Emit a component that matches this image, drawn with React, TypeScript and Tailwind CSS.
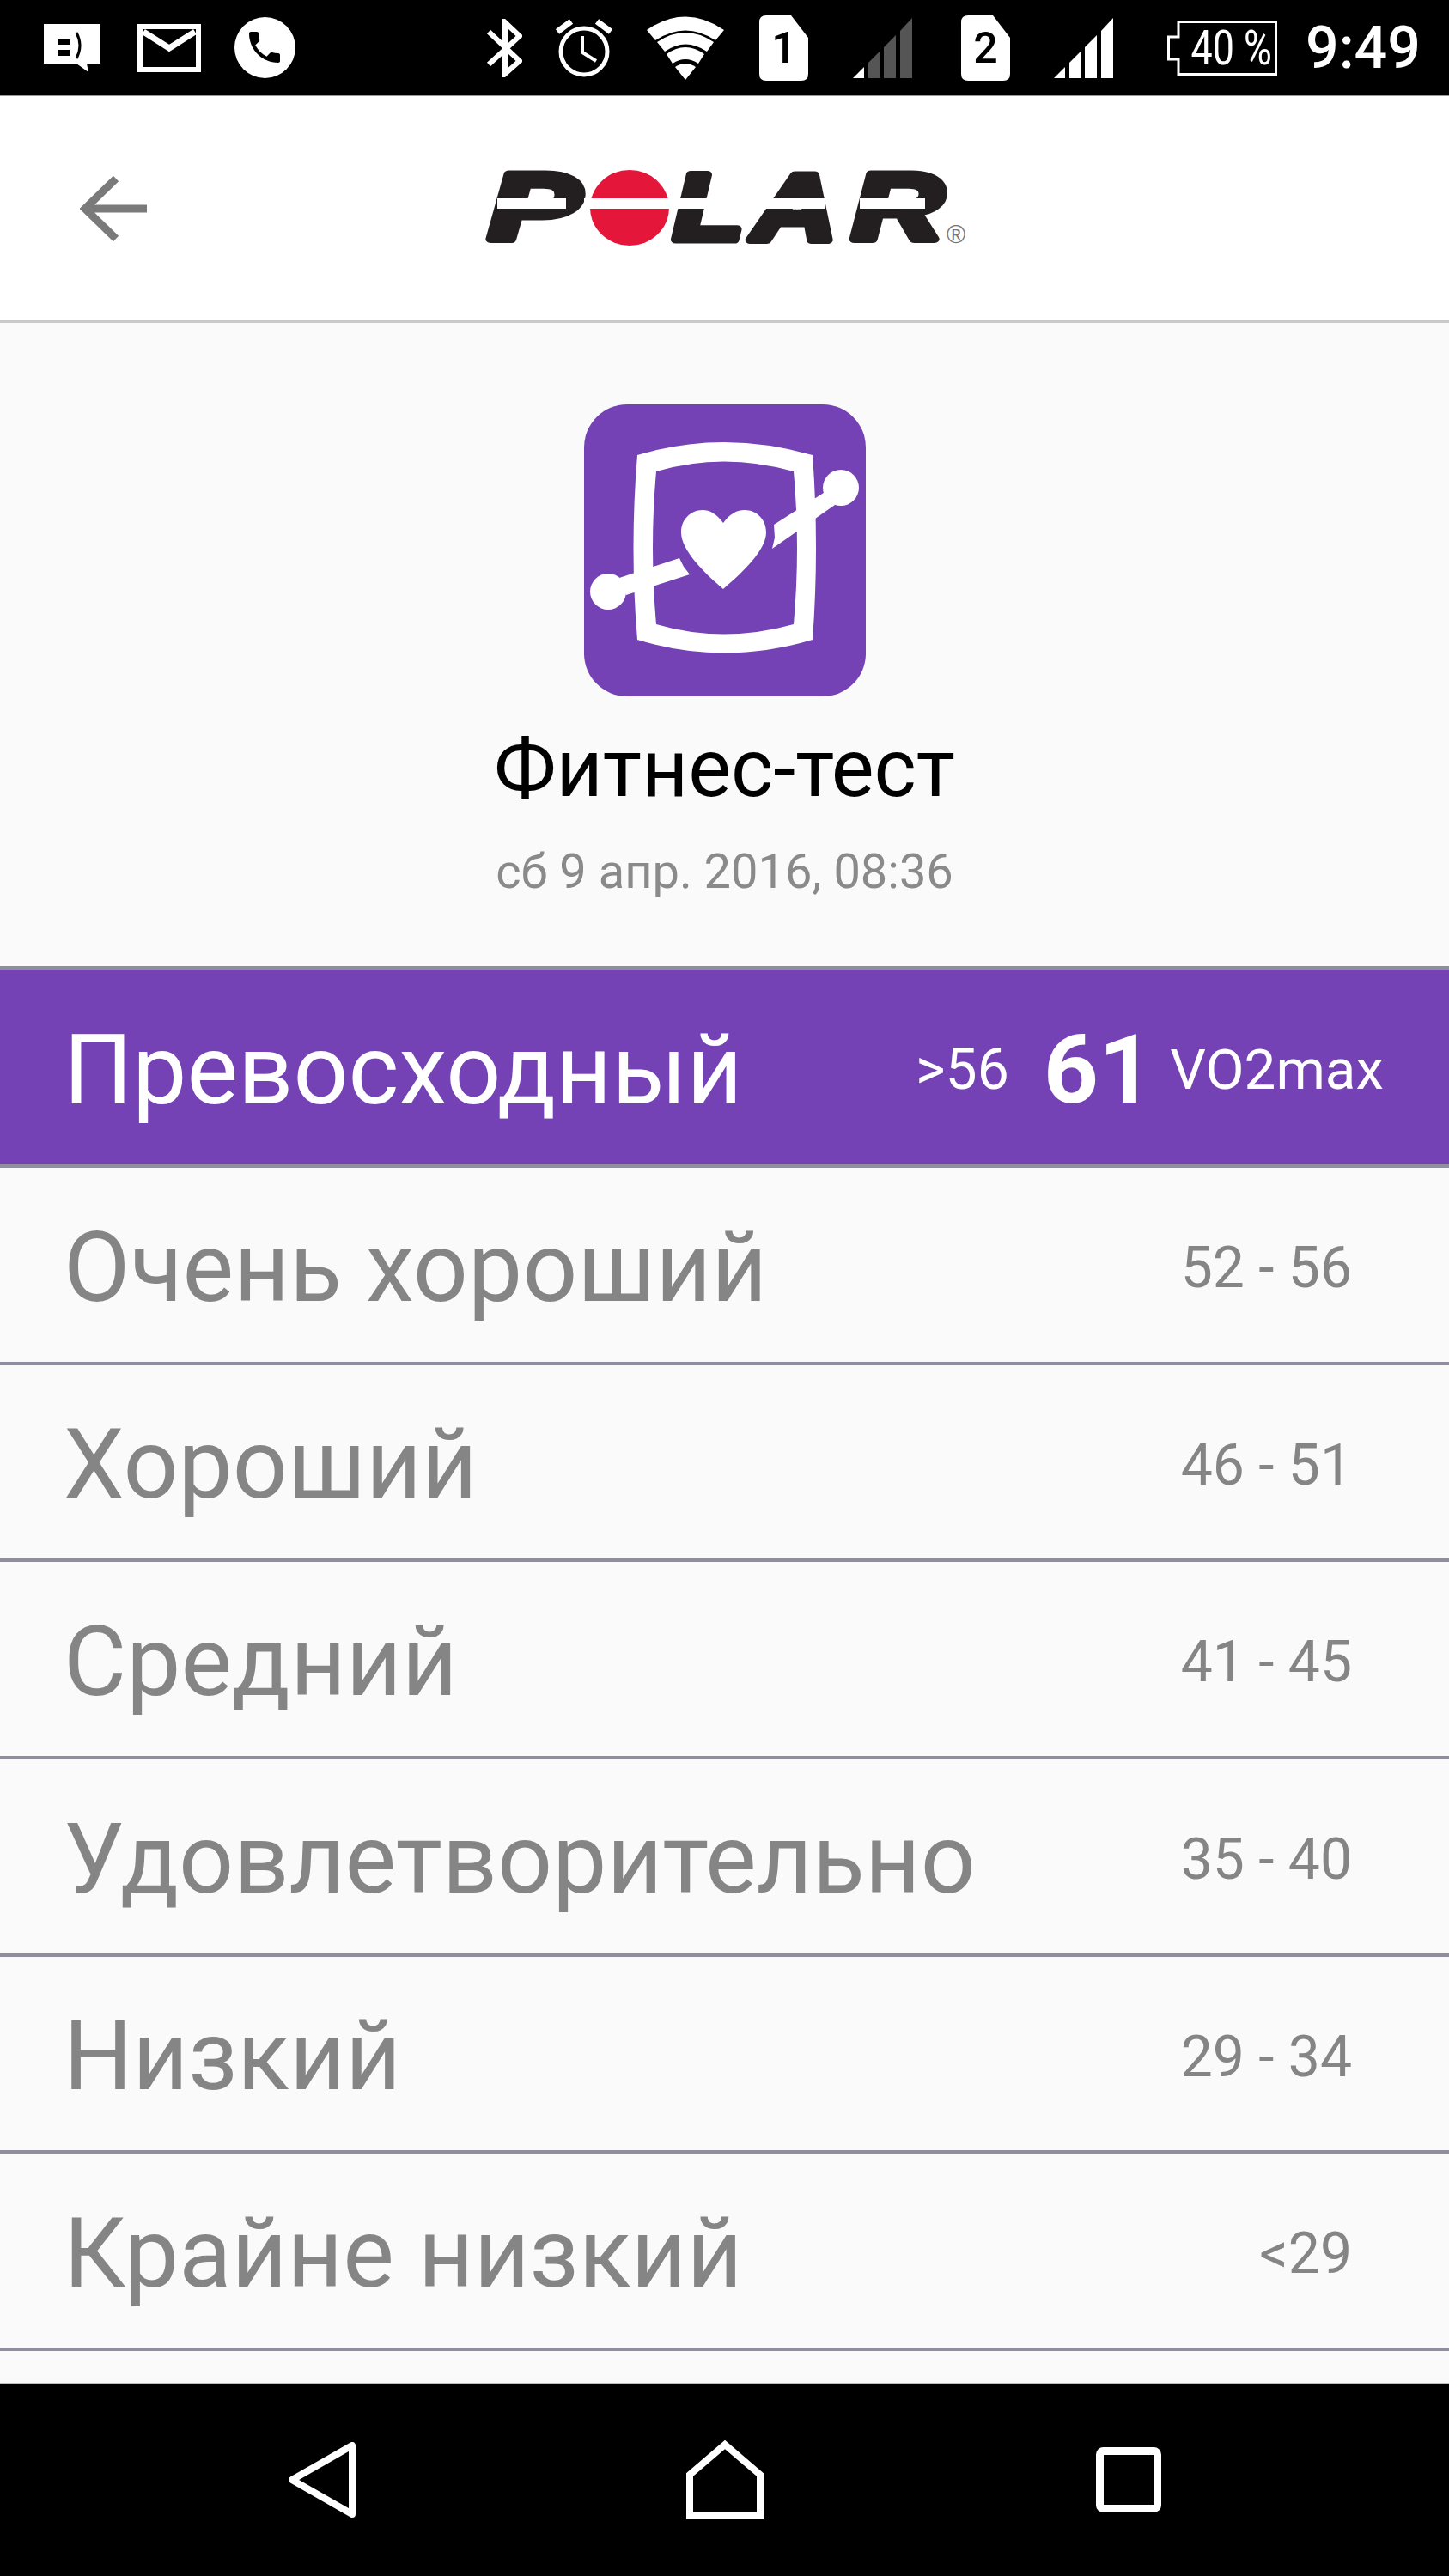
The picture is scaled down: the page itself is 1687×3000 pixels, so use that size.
const ratings = [
  { name: "Очень хороший", range: "52 - 56" },
  { name: "Хороший", range: "46 - 51" },
  { name: "Средний", range: "41 - 45" },
  { name: "Удовлетворительно", range: "35 - 40" },
  { name: "Низкий", range: "29 - 34" },
  { name: "Крайне низкий", range: "<29" },
];

const SignalIcon = ({ dim }: { dim?: boolean }) => {
  const fill = dim ? "#555555" : "#ffffff";
  return (
    <svg width="70" height="70" viewBox="0 0 70 70">
      <polygon points="0,70 13,57 13,70" fill="#ffffff" />
      <polygon points="18,70 18,52 32,38 32,70" fill={fill} />
      <polygon points="36,70 36,34 50,20 50,70" fill={fill} />
      <polygon points="55,70 55,15 69,0 69,70" fill={fill} />
    </svg>
  );
};

const SimIcon = ({ n }: { n: string }) => (
  <div className="relative w-[57px] h-[76px] flex items-center justify-center">
    <svg width="57" height="76" viewBox="0 0 57 76" className="absolute inset-0">
      <path d="M8 0H37L57 26V68Q57 76 49 76H8Q0 76 0 68V8Q0 0 8 0Z" fill="#ffffff" />
    </svg>
    <span className="relative text-[50px] leading-none font-medium text-black font-['Roboto',sans-serif]">{n}</span>
  </div>
);

const FitnessIcon = () => (
  <div className="w-[328px] h-[340px] rounded-[50px] bg-[#7442b4]">
    <svg width="328" height="340" viewBox="0 0 328 340">
      <path
        fillRule="evenodd"
        d="M62 59Q162 29 266 59Q274 167 266 274Q162 305 62 274Q53 167 62 59ZM84 78Q162 55 244 78Q252 167 244 256Q162 279 84 256Q76 167 84 78Z"
        fill="#ffffff"
      />
      <path
        d="M162 138C154 127 146 123 138 123C124 123 113 134 113 149C113 170 140 196 162 215C184 196 212 170 212 149C212 134 201 123 187 123C178 123 170 127 162 138Z"
        fill="#ffffff"
      />
      <polygon points="221,140 282,101 292,117 219,168 222,155" fill="#ffffff" />
      <polygon points="111,179 41,202 49,222 123,198 116,189" fill="#ffffff" />
      <ellipse cx="299" cy="97" rx="21" ry="21" fill="#ffffff" />
      <ellipse cx="28" cy="218" rx="21" ry="21" fill="#ffffff" />
    </svg>
  </div>
);

// logo letters stay real text, each one fitted to its slot
const LogoLetter = ({ x, width, children }: { x: number; width: number; children: string }) => (
  <text
    x={x}
    y="82"
    fontFamily="'Liberation Sans', sans-serif"
    fontWeight="700"
    fontStyle="italic"
    fontSize="110"
    fill="#231f20"
    stroke="#231f20"
    strokeWidth="9"
    strokeLinejoin="round"
    textLength={width}
    lengthAdjust="spacingAndGlyphs"
  >
    {children}
  </text>
);

const PolarLogo = () => (
  <svg width="564" height="92" viewBox="0 0 564 92" className="ml-[394px] overflow-visible">
    <LogoLetter x={4} width={106}>P</LogoLetter>
    <LogoLetter x={219} width={82}>L</LogoLetter>
    <LogoLetter x={311} width={98}>A</LogoLetter>
    <LogoLetter x={427} width={106}>R</LogoLetter>
    <ellipse cx="168" cy="45" rx="46" ry="44" fill="#e4173a" />
    <rect x="115" y="34" width="108" height="12" fill="#ffffff" />
    <rect x="14" y="34" width="80" height="12" fill="#ffffff" />
    <rect x="218" y="34" width="44" height="12" fill="#ffffff" />
    <rect x="325" y="34" width="70" height="12" fill="#ffffff" />
    <rect x="436" y="34" width="76" height="12" fill="#ffffff" />
    <text x="537" y="86" fontFamily="'Liberation Sans', sans-serif" fontSize="30" fill="#777777">®</text>
  </svg>
);

export default function App() {
  return (
    <div className="w-[1687px] h-[3000px] flex flex-col bg-[#fafafa] font-['Roboto',sans-serif]">
      {/* status bar */}
      <div className="h-[112px] bg-black flex items-center text-white border-b border-[#9a9a9a]">
        <svg width="66" height="56" viewBox="0 0 66 56" className="ml-[51px]">
          <path d="M0 0H66V46H50L52 56L38 46H0Z" fill="#ffffff" />
          <rect x="17" y="17" width="13" height="7" fill="#000000" />
          <rect x="17" y="30" width="13" height="7" fill="#000000" />
          <path d="M38 10Q46 25 38 40" stroke="#000000" strokeWidth="3" fill="none" />
        </svg>
        <svg width="74" height="56" viewBox="0 0 74 56" className="ml-[43px]">
          <rect x="3" y="3" width="68" height="50" fill="none" stroke="#ffffff" strokeWidth="6" />
          <path d="M7 9L37 28L67 9" fill="none" stroke="#ffffff" strokeWidth="7" />
        </svg>
        <svg width="71" height="71" viewBox="0 0 71 71" className="ml-[39px]">
          <circle cx="35.5" cy="35.5" r="35.5" fill="#ffffff" />
          <g transform="translate(11 11) scale(2)">
            <path
              d="M6.62 10.79c1.44 2.83 3.76 5.14 6.59 6.59l2.2-2.2c.27-.27.67-.36 1.02-.24 1.12.37 2.33.57 3.57.57.55 0 1 .45 1 1V20c0 .55-.45 1-1 1-9.39 0-17-7.61-17-17 0-.55.45-1 1-1h3.5c.55 0 1 .45 1 1 0 1.25.2 2.45.57 3.57.11.35.03.74-.25 1.02l-2.2 2.2z"
              fill="#000000"
            />
          </g>
        </svg>
        <svg width="42" height="68" viewBox="0 0 42 68" className="ml-[222px]">
          <path d="M3 15L39 49L22 64V4L39 20L3 53" fill="none" stroke="#ffffff" strokeWidth="6" />
        </svg>
        <svg width="66" height="68" viewBox="0 0 66 68" className="ml-[39px]">
          <circle cx="33" cy="38" r="27" fill="none" stroke="#ffffff" strokeWidth="5" />
          <path d="M31 20V39L47 49" fill="none" stroke="#ffffff" strokeWidth="4" />
          <path d="M2 15L18 3M64 15L48 3" stroke="#ffffff" strokeWidth="7" />
        </svg>
        <svg width="91" height="76" viewBox="0 0 91 76" className="ml-[40px]">
          <path d="M0 17Q45 -14 90 17L80 29Q45 6 10 29Z" fill="#ffffff" />
          <path d="M12 31Q45 9 78 31L70 42Q45 25 21 42Z" fill="#ffffff" />
          <path d="M23 45Q45 29 67 45L60 56Q45 46 30 56Z" fill="#ffffff" />
          <path d="M33 60Q45 52 57 60L45 75Z" fill="#ffffff" />
        </svg>
        <div className="ml-[40px]"><SimIcon n="1" /></div>
        <div className="ml-[52px]"><SignalIcon dim /></div>
        <div className="ml-[56px]"><SimIcon n="2" /></div>
        <div className="ml-[51px]"><SignalIcon /></div>
        <div className="relative ml-[62px] w-[128px] h-[64px] flex items-center justify-end pr-[6px]">
          <svg width="128" height="64" viewBox="0 0 128 64" className="absolute inset-0">
            <path d="M13 1.5H126.5V62.5H13V45H1.5V19H13Z" fill="none" stroke="#ffffff" strokeWidth="3" />
          </svg>
          <span className="relative text-[56px] leading-none whitespace-nowrap origin-right scale-x-[0.8]">40 %</span>
        </div>
        <span className="ml-[33px] text-[68px] leading-none font-medium">9:49</span>
      </div>

      {/* app bar */}
      <div className="h-[264px] bg-white border-b-[3px] border-[#c9c9c9] flex items-center relative">
        <svg width="78" height="76" viewBox="0 0 78 76" className="ml-[93px]">
          <path d="M78 38H8M42 3L6 38L42 73" fill="none" stroke="#7a7a7a" strokeWidth="9" />
        </svg>
        <PolarLogo />
      </div>

      {/* test header */}
      <div className="h-[749px] flex flex-col items-center pt-[95px]">
        <FitnessIcon />
        <div className="mt-[29px] text-[94px] leading-[110px] text-black">Фитнес-тест</div>
        <div className="mt-[32px] text-[56px] leading-[66px] text-[#8a8a8a]">сб 9 апр. 2016, 08:36</div>
      </div>

      {/* rating table */}
      <div className="border-t-[5px] border-[#8e8e9e]">
        <div className="h-[230px] border-b-[4px] border-[#8e8e9e] bg-[#7442b4] text-white flex items-center justify-between pt-[8px] pl-[74px] pr-[76px]">
          <span className="text-[112.5px] leading-none">Превосходный</span>
          <div className="flex items-center -mt-[3px]">
            <span className="text-[66px] leading-none">&gt;56</span>
            <span className="ml-[40px] text-[112px] leading-none font-bold">61</span>
            <span className="ml-[19px] text-[65.5px] leading-none">VO2max</span>
          </div>
        </div>
        {ratings.map((rating) => (
          <div
            key={rating.name}
            className="h-[229.7px] border-b-[4px] border-[#8e8e9e] flex items-center justify-between pt-[8px] pl-[74px] pr-[113px] text-[#858585]"
          >
            <span className="text-[112.5px] leading-none">{rating.name}</span>
            <span className="text-[66px] leading-none">{rating.range}</span>
          </div>
        ))}
      </div>

      <div className="flex-1" />

      {/* navigation bar */}
      <div className="h-[225px] bg-black flex items-center border-t border-[#bdbdbd]">
        <svg width="78" height="88" viewBox="0 0 78 88" className="ml-[336px]">
          <path d="M74 4V84L4 44Z" fill="none" stroke="#ffffff" strokeWidth="8" strokeLinejoin="round" />
        </svg>
        <svg width="90" height="92" viewBox="0 0 90 92" className="ml-[385px]">
          <path d="M4 40L45 5L86 40V88H4Z" fill="none" stroke="#ffffff" strokeWidth="8" />
        </svg>
        <svg width="76" height="76" viewBox="0 0 76 76" className="ml-[387px]">
          <rect x="4.5" y="4.5" width="67" height="67" rx="4" fill="none" stroke="#ffffff" strokeWidth="9" />
        </svg>
      </div>
    </div>
  );
}
